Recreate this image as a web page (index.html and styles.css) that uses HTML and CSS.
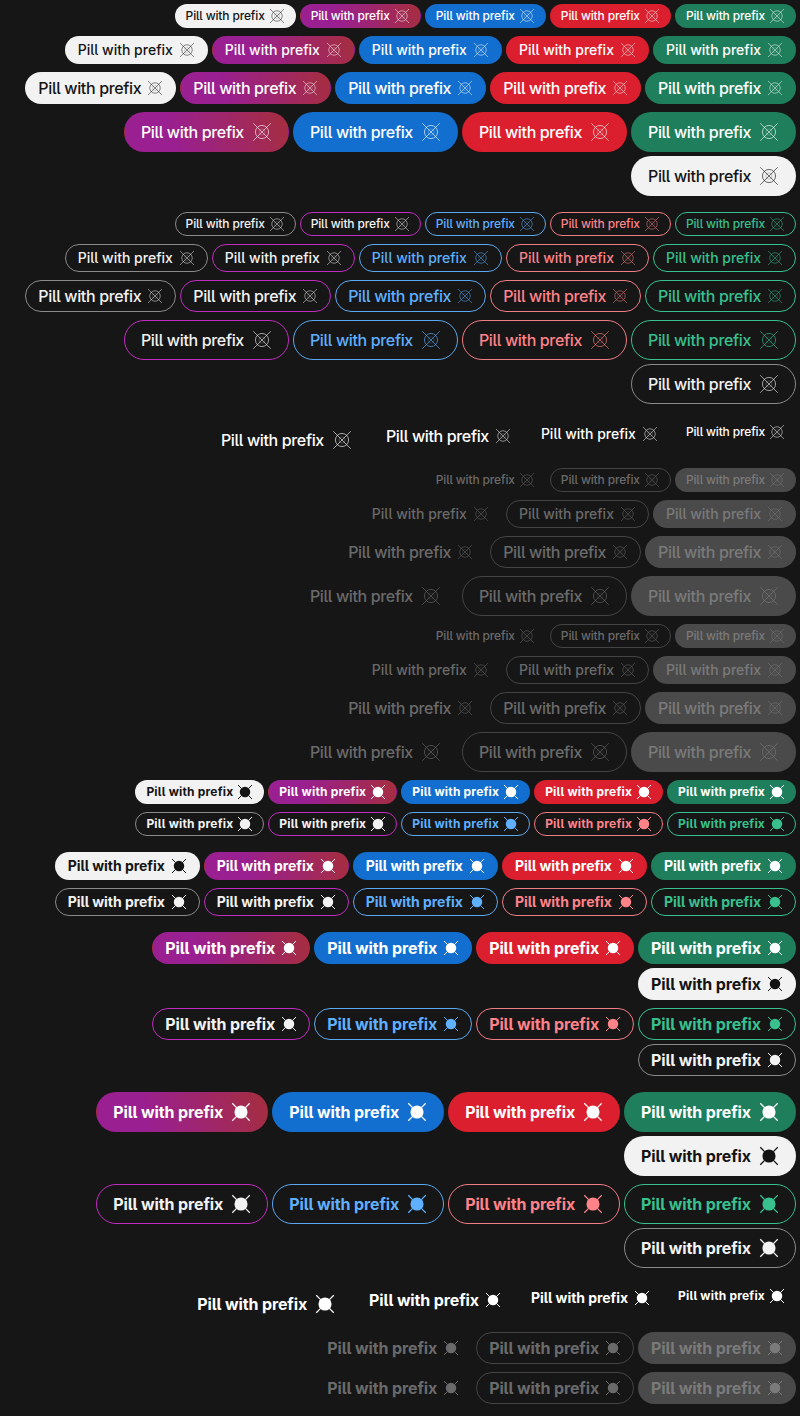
FILE: index.html
```html
<!DOCTYPE html>
<html lang="en">
<head>
<meta charset="utf-8">
<title>Pills</title>
<link rel="stylesheet" href="styles.css">
</head>
<body>
<svg class="defs" width="0" height="0" aria-hidden="true">
  <symbol id="r" viewBox="0 0 16 16"><circle class="rc" cx="8" cy="8" r="5.25"/><circle class="rc in" cx="8" cy="8" r="2.5"/><path class="rl" d="M1 1 15 15M15 1 1 15"/></symbol>
  <symbol id="b" viewBox="0 0 16 16"><circle cx="8" cy="8" r="5.25" fill="currentColor"/><path class="bl" d="M1 1 4.5 4.5M15 1 11.5 4.5M1 15 4.5 11.5M15 15 11.5 11.5"/></symbol>
</svg>

<div class="row xs">
  <div class="pill green">Pill with prefix<svg class="icon"><use href="#r"/></svg></div>
  <div class="pill red">Pill with prefix<svg class="icon"><use href="#r"/></svg></div>
  <div class="pill blue">Pill with prefix<svg class="icon"><use href="#r"/></svg></div>
  <div class="pill purple">Pill with prefix<svg class="icon"><use href="#r"/></svg></div>
  <div class="pill white">Pill with prefix<svg class="icon"><use href="#r"/></svg></div>
</div>
<div class="row sm">
  <div class="pill green">Pill with prefix<svg class="icon"><use href="#r"/></svg></div>
  <div class="pill red">Pill with prefix<svg class="icon"><use href="#r"/></svg></div>
  <div class="pill blue">Pill with prefix<svg class="icon"><use href="#r"/></svg></div>
  <div class="pill purple">Pill with prefix<svg class="icon"><use href="#r"/></svg></div>
  <div class="pill white">Pill with prefix<svg class="icon"><use href="#r"/></svg></div>
</div>
<div class="row md">
  <div class="pill green">Pill with prefix<svg class="icon"><use href="#r"/></svg></div>
  <div class="pill red">Pill with prefix<svg class="icon"><use href="#r"/></svg></div>
  <div class="pill blue">Pill with prefix<svg class="icon"><use href="#r"/></svg></div>
  <div class="pill purple">Pill with prefix<svg class="icon"><use href="#r"/></svg></div>
  <div class="pill white">Pill with prefix<svg class="icon"><use href="#r"/></svg></div>
</div>
<div class="row lg end">
  <div class="pill green">Pill with prefix<svg class="icon"><use href="#r"/></svg></div>
  <div class="pill red">Pill with prefix<svg class="icon"><use href="#r"/></svg></div>
  <div class="pill blue">Pill with prefix<svg class="icon"><use href="#r"/></svg></div>
  <div class="pill purple">Pill with prefix<svg class="icon"><use href="#r"/></svg></div>
  <div class="pill white">Pill with prefix<svg class="icon"><use href="#r"/></svg></div>
</div>

<div class="row xs">
  <div class="pill o-green">Pill with prefix<svg class="icon"><use href="#r"/></svg></div>
  <div class="pill o-red">Pill with prefix<svg class="icon"><use href="#r"/></svg></div>
  <div class="pill o-blue">Pill with prefix<svg class="icon"><use href="#r"/></svg></div>
  <div class="pill o-purple">Pill with prefix<svg class="icon"><use href="#r"/></svg></div>
  <div class="pill o-white">Pill with prefix<svg class="icon"><use href="#r"/></svg></div>
</div>
<div class="row sm">
  <div class="pill o-green">Pill with prefix<svg class="icon"><use href="#r"/></svg></div>
  <div class="pill o-red">Pill with prefix<svg class="icon"><use href="#r"/></svg></div>
  <div class="pill o-blue">Pill with prefix<svg class="icon"><use href="#r"/></svg></div>
  <div class="pill o-purple">Pill with prefix<svg class="icon"><use href="#r"/></svg></div>
  <div class="pill o-white">Pill with prefix<svg class="icon"><use href="#r"/></svg></div>
</div>
<div class="row md">
  <div class="pill o-green">Pill with prefix<svg class="icon"><use href="#r"/></svg></div>
  <div class="pill o-red">Pill with prefix<svg class="icon"><use href="#r"/></svg></div>
  <div class="pill o-blue">Pill with prefix<svg class="icon"><use href="#r"/></svg></div>
  <div class="pill o-purple">Pill with prefix<svg class="icon"><use href="#r"/></svg></div>
  <div class="pill o-white">Pill with prefix<svg class="icon"><use href="#r"/></svg></div>
</div>
<div class="row lg end">
  <div class="pill o-green">Pill with prefix<svg class="icon"><use href="#r"/></svg></div>
  <div class="pill o-red">Pill with prefix<svg class="icon"><use href="#r"/></svg></div>
  <div class="pill o-blue">Pill with prefix<svg class="icon"><use href="#r"/></svg></div>
  <div class="pill o-purple">Pill with prefix<svg class="icon"><use href="#r"/></svg></div>
  <div class="pill o-white">Pill with prefix<svg class="icon"><use href="#r"/></svg></div>
</div>

<div class="row">
  <div class="pill xs ghost">Pill with prefix<svg class="icon"><use href="#r"/></svg></div>
  <div class="pill sm ghost">Pill with prefix<svg class="icon"><use href="#r"/></svg></div>
  <div class="pill md ghost">Pill with prefix<svg class="icon"><use href="#r"/></svg></div>
  <div class="pill lg ghost">Pill with prefix<svg class="icon"><use href="#r"/></svg></div>
</div>

<div class="row xs">
  <div class="pill d-solid">Pill with prefix<svg class="icon"><use href="#r"/></svg></div>
  <div class="pill d-outline">Pill with prefix<svg class="icon"><use href="#r"/></svg></div>
  <div class="pill d-ghost">Pill with prefix<svg class="icon"><use href="#r"/></svg></div>
</div>
<div class="row sm">
  <div class="pill d-solid">Pill with prefix<svg class="icon"><use href="#r"/></svg></div>
  <div class="pill d-outline">Pill with prefix<svg class="icon"><use href="#r"/></svg></div>
  <div class="pill d-ghost">Pill with prefix<svg class="icon"><use href="#r"/></svg></div>
</div>
<div class="row md">
  <div class="pill d-solid">Pill with prefix<svg class="icon"><use href="#r"/></svg></div>
  <div class="pill d-outline">Pill with prefix<svg class="icon"><use href="#r"/></svg></div>
  <div class="pill d-ghost">Pill with prefix<svg class="icon"><use href="#r"/></svg></div>
</div>
<div class="row lg">
  <div class="pill d-solid">Pill with prefix<svg class="icon"><use href="#r"/></svg></div>
  <div class="pill d-outline">Pill with prefix<svg class="icon"><use href="#r"/></svg></div>
  <div class="pill d-ghost">Pill with prefix<svg class="icon"><use href="#r"/></svg></div>
</div>

<div class="row xs">
  <div class="pill d-solid">Pill with prefix<svg class="icon"><use href="#r"/></svg></div>
  <div class="pill d-outline">Pill with prefix<svg class="icon"><use href="#r"/></svg></div>
  <div class="pill d-ghost">Pill with prefix<svg class="icon"><use href="#r"/></svg></div>
</div>
<div class="row sm">
  <div class="pill d-solid">Pill with prefix<svg class="icon"><use href="#r"/></svg></div>
  <div class="pill d-outline">Pill with prefix<svg class="icon"><use href="#r"/></svg></div>
  <div class="pill d-ghost">Pill with prefix<svg class="icon"><use href="#r"/></svg></div>
</div>
<div class="row md">
  <div class="pill d-solid">Pill with prefix<svg class="icon"><use href="#r"/></svg></div>
  <div class="pill d-outline">Pill with prefix<svg class="icon"><use href="#r"/></svg></div>
  <div class="pill d-ghost">Pill with prefix<svg class="icon"><use href="#r"/></svg></div>
</div>
<div class="row lg">
  <div class="pill d-solid">Pill with prefix<svg class="icon"><use href="#r"/></svg></div>
  <div class="pill d-outline">Pill with prefix<svg class="icon"><use href="#r"/></svg></div>
  <div class="pill d-ghost">Pill with prefix<svg class="icon"><use href="#r"/></svg></div>
</div>

<div class="row xs bold">
  <div class="pill green">Pill with prefix<svg class="icon"><use href="#b"/></svg></div>
  <div class="pill red">Pill with prefix<svg class="icon"><use href="#b"/></svg></div>
  <div class="pill blue">Pill with prefix<svg class="icon"><use href="#b"/></svg></div>
  <div class="pill purple">Pill with prefix<svg class="icon"><use href="#b"/></svg></div>
  <div class="pill white">Pill with prefix<svg class="icon"><use href="#b"/></svg></div>
</div>
<div class="row xs bold end">
  <div class="pill o-green">Pill with prefix<svg class="icon"><use href="#b"/></svg></div>
  <div class="pill o-red">Pill with prefix<svg class="icon"><use href="#b"/></svg></div>
  <div class="pill o-blue">Pill with prefix<svg class="icon"><use href="#b"/></svg></div>
  <div class="pill o-purple">Pill with prefix<svg class="icon"><use href="#b"/></svg></div>
  <div class="pill o-white">Pill with prefix<svg class="icon"><use href="#b"/></svg></div>
</div>
<div class="row sm bold">
  <div class="pill green">Pill with prefix<svg class="icon"><use href="#b"/></svg></div>
  <div class="pill red">Pill with prefix<svg class="icon"><use href="#b"/></svg></div>
  <div class="pill blue">Pill with prefix<svg class="icon"><use href="#b"/></svg></div>
  <div class="pill purple">Pill with prefix<svg class="icon"><use href="#b"/></svg></div>
  <div class="pill white">Pill with prefix<svg class="icon"><use href="#b"/></svg></div>
</div>
<div class="row sm bold end">
  <div class="pill o-green">Pill with prefix<svg class="icon"><use href="#b"/></svg></div>
  <div class="pill o-red">Pill with prefix<svg class="icon"><use href="#b"/></svg></div>
  <div class="pill o-blue">Pill with prefix<svg class="icon"><use href="#b"/></svg></div>
  <div class="pill o-purple">Pill with prefix<svg class="icon"><use href="#b"/></svg></div>
  <div class="pill o-white">Pill with prefix<svg class="icon"><use href="#b"/></svg></div>
</div>
<div class="row md bold">
  <div class="pill green">Pill with prefix<svg class="icon"><use href="#b"/></svg></div>
  <div class="pill red">Pill with prefix<svg class="icon"><use href="#b"/></svg></div>
  <div class="pill blue">Pill with prefix<svg class="icon"><use href="#b"/></svg></div>
  <div class="pill purple">Pill with prefix<svg class="icon"><use href="#b"/></svg></div>
  <div class="pill white">Pill with prefix<svg class="icon"><use href="#b"/></svg></div>
</div>
<div class="row md bold end">
  <div class="pill o-green">Pill with prefix<svg class="icon"><use href="#b"/></svg></div>
  <div class="pill o-red">Pill with prefix<svg class="icon"><use href="#b"/></svg></div>
  <div class="pill o-blue">Pill with prefix<svg class="icon"><use href="#b"/></svg></div>
  <div class="pill o-purple">Pill with prefix<svg class="icon"><use href="#b"/></svg></div>
  <div class="pill o-white">Pill with prefix<svg class="icon"><use href="#b"/></svg></div>
</div>
<div class="row lg bold">
  <div class="pill green">Pill with prefix<svg class="icon"><use href="#b"/></svg></div>
  <div class="pill red">Pill with prefix<svg class="icon"><use href="#b"/></svg></div>
  <div class="pill blue">Pill with prefix<svg class="icon"><use href="#b"/></svg></div>
  <div class="pill purple">Pill with prefix<svg class="icon"><use href="#b"/></svg></div>
  <div class="pill white">Pill with prefix<svg class="icon"><use href="#b"/></svg></div>
</div>
<div class="row lg bold end">
  <div class="pill o-green">Pill with prefix<svg class="icon"><use href="#b"/></svg></div>
  <div class="pill o-red">Pill with prefix<svg class="icon"><use href="#b"/></svg></div>
  <div class="pill o-blue">Pill with prefix<svg class="icon"><use href="#b"/></svg></div>
  <div class="pill o-purple">Pill with prefix<svg class="icon"><use href="#b"/></svg></div>
  <div class="pill o-white">Pill with prefix<svg class="icon"><use href="#b"/></svg></div>
</div>

<div class="row bold">
  <div class="pill xs ghost">Pill with prefix<svg class="icon"><use href="#b"/></svg></div>
  <div class="pill sm ghost">Pill with prefix<svg class="icon"><use href="#b"/></svg></div>
  <div class="pill md ghost">Pill with prefix<svg class="icon"><use href="#b"/></svg></div>
  <div class="pill lg ghost">Pill with prefix<svg class="icon"><use href="#b"/></svg></div>
</div>
<div class="row md bold">
  <div class="pill d-solid">Pill with prefix<svg class="icon"><use href="#b"/></svg></div>
  <div class="pill d-outline">Pill with prefix<svg class="icon"><use href="#b"/></svg></div>
  <div class="pill d-ghost">Pill with prefix<svg class="icon"><use href="#b"/></svg></div>
</div>
<div class="row md bold">
  <div class="pill d-solid">Pill with prefix<svg class="icon"><use href="#b"/></svg></div>
  <div class="pill d-outline">Pill with prefix<svg class="icon"><use href="#b"/></svg></div>
  <div class="pill d-ghost">Pill with prefix<svg class="icon"><use href="#b"/></svg></div>
</div>
```

FILE: styles.css
```css
html, body { margin: 0; background: #161616; }
body {
  padding: 4px 4px 12px;
  display: flex;
  flex-direction: column;
  gap: 8px;
  font-family: Inter, "Liberation Sans", sans-serif;
  font-weight: 500;
  font-feature-settings: "cv05";
}
.defs { position: absolute; }

.row {
  display: flex;
  flex-flow: row-reverse wrap;
  align-items: flex-start;
  gap: 4px;
}
.end { margin-bottom: 8px; }

.pill {
  box-sizing: border-box;
  display: flex;
  align-items: center;
  border: 1px solid transparent;
  border-radius: 999px;
  white-space: nowrap;
  color: #fff;
}
.xs .pill, .pill.xs { height: 24px; padding: 0 10px; gap: 4px; font-size: 12px; line-height: 14px; letter-spacing: -.15px; }
.sm .pill, .pill.sm { height: 28px; padding: 0 12px; gap: 6px; font-size: 14px; line-height: 16px; letter-spacing: 0; }
.md .pill, .pill.md { height: 32px; padding: 0 12px; gap: 6px; font-size: 16px; letter-spacing: -.355px; }
.lg .pill, .pill.lg { height: 40px; padding: 0 16px; gap: 8px; font-size: 16px; letter-spacing: -.35px; }

.bold { font-weight: 700; }
.bold.xs .pill, .bold .pill.xs { letter-spacing: .19px; }
.bold.sm .pill, .bold .pill.sm { letter-spacing: -.05px; }
.bold.md .pill, .bold .pill.md, .bold.lg .pill, .bold .pill.lg { letter-spacing: -.12px; }

.icon { width: 16px; height: 16px; flex: none; }
.lg .icon, .pill.lg .icon { width: 20px; height: 20px; }
.rc, .rl { fill: none; stroke: currentColor; stroke-width: .5; }
.in { opacity: .35; }
.bl { fill: none; stroke: currentColor; stroke-width: 1; }

.white { background: #f2f2f2; color: #141414; }
.purple { background: linear-gradient(70deg, #9a1f90 30%, #a52e3e); }
.blue { background: #126fd0; }
.red { background: #dc1f2e; }
.green { background: #1f7f5c; }

.o-white { border-color: #8a8a8a; color: #f2f2f2; }
.o-purple { border-color: #c02cc0; color: #f2f2f2; }
.o-blue { border-color: #5aa8f0; color: #5fb0ff; }
.o-red { border-color: #f07c84; color: #ff8389; }
.o-green { border-color: #38c08e; color: #38c08e; }

.ghost { color: #fff; }
.d-ghost { color: #6a6a6a; }
.d-outline { color: #6a6a6a; border-color: #444; }
.d-solid { color: #7a7a7a; background: #4a4a4a; }
```
